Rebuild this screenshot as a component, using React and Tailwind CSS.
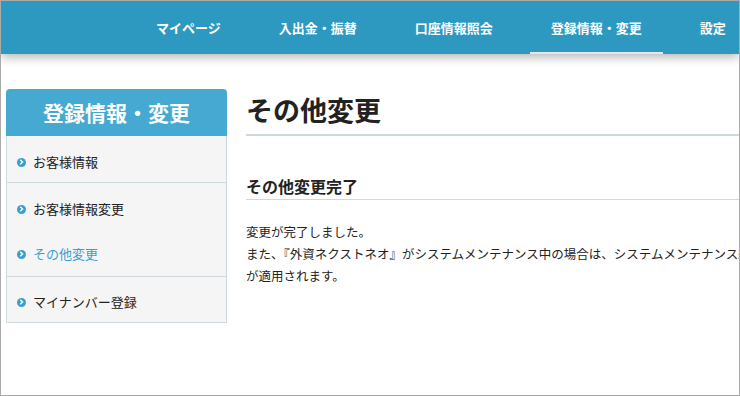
import React from "react";

const navItems = [
  { label: "マイページ" },
  { label: "入出金・振替" },
  { label: "口座情報照会" },
  { label: "登録情報・変更", active: true },
  { label: "設定" },
];

const Bullet = () => (
  <span className="inline-flex h-[9px] w-[9px] shrink-0 items-center justify-center rounded-full bg-[#3a9fce]">
    <svg width="5" height="6" viewBox="0 0 5 6">
      <path d="M1.2 0.8 L3.6 3 L1.2 5.2" stroke="#fff" strokeWidth="1.3" fill="none" />
    </svg>
  </span>
);

const SideItem = ({ label, active }) => (
  <div className="flex items-center gap-[7px] pl-[10px] leading-[20px]">
    <Bullet />
    <span className={active ? "text-[#3a9fd3]" : "text-[#222]"}>{label}</span>
  </div>
);

const App = () => {
  return (
    <div className="h-[396px] w-[740px] overflow-hidden border border-[#aaa] bg-white font-['Noto_Sans_CJK_JP','Noto_Sans',sans-serif] text-[13px] text-[#222]">
      {/* top nav */}
      <nav className="relative z-10 flex h-[53px] bg-[#2e99c0] pl-[134px] shadow-[0_3px_10px_rgba(0,0,0,0.3)]">
        {navItems.map((item) => (
          <div
            key={item.label}
            className={`mr-[16px] flex h-full items-center whitespace-nowrap px-[21px] text-[13px] font-bold text-white ${
              item.active ? "border-b-2 border-[#e6e6e6] pt-[2px]" : ""
            }`}
          >
            {item.label}
          </div>
        ))}
      </nav>

      <div className="flex pl-[5px] pt-[35px]">
        {/* sidebar */}
        <aside className="w-[221px] shrink-0">
          <div className="flex h-[47px] items-center justify-center rounded-t-[4px] bg-[#45a9d1] text-[21px] font-bold text-white">
            登録情報・変更
          </div>
          <div className="border border-t-0 border-[#cfd8dc] bg-[#f5f5f5]">
            <div className="border-b border-[#cfd8dc] pb-[10px] pt-[16px]">
              <SideItem label="お客様情報" />
            </div>
            <div className="flex flex-col gap-[25px] border-b border-[#cfd8dc] pb-[12px] pt-[16px]">
              <SideItem label="お客様情報変更" />
              <SideItem label="その他変更" active />
            </div>
            <div className="pb-[10px] pt-[15px]">
              <SideItem label="マイナンバー登録" />
            </div>
          </div>
        </aside>

        {/* main content */}
        <main className="ml-[19px] min-w-0 flex-1 overflow-hidden">
          <h1 className="border-b-2 border-[#cfd8dc] pb-[9px] pt-[6px] text-[27px] font-bold leading-[30px] text-[#222]">
            その他変更
          </h1>
          <h2 className="mt-[40px] border-b border-[#cfd8dc] pb-[3px] text-[16px] font-bold leading-[20px]">
            その他変更完了
          </h2>
          <p className="mt-[21px] whitespace-nowrap text-[12.5px] leading-[22px]">
            変更が完了しました。
            <br />
            また、『外資ネクストネオ』がシステムメンテナンス中の場合は、システムメンテナンス終了後に変更内容
            <br />
            が適用されます。
          </p>
        </main>
      </div>
    </div>
  );
};

export default App;
